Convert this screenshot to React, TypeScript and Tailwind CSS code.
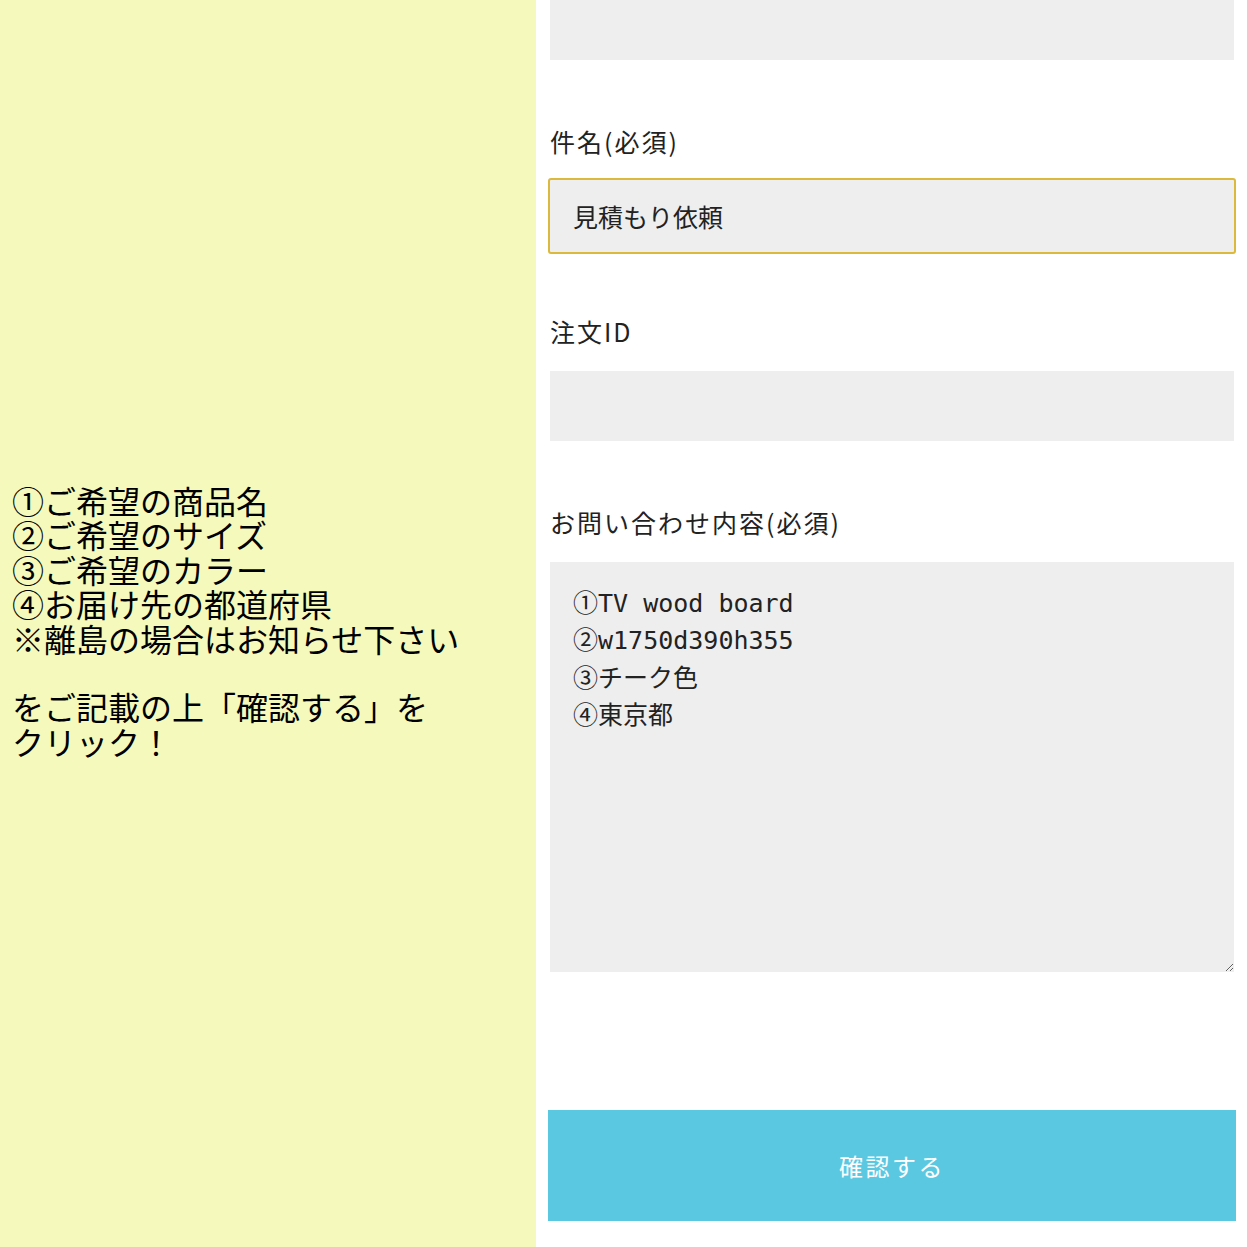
import React from "react";

const jp = { fontFamily: '"Noto Sans CJK JP", "Noto Sans", sans-serif' };

export default function App() {
  return (
    <div className="flex h-[1247px] w-[1247px] overflow-hidden bg-white">
      <div className="flex w-[536px] shrink-0 items-center bg-[#f5f9bb] pb-[6px] pl-[12px]">
        <p className="text-[32px] leading-[34.4px] text-black" style={jp}>
          ①ご希望の商品名
          <br />
          ②ご希望のサイズ
          <br />
          ③ご希望のカラー
          <br />
          ④お届け先の都道府県
          <br />
          ※離島の場合はお知らせ下さい
          <br />
          <br />
          をご記載の上「確認する」を
          <br />
          クリック！
        </p>
      </div>
      <div className="flex flex-1 flex-col pl-[12px] pr-[11px]" style={jp}>
        <input
          readOnly
          value=""
          className="mx-[2px] -mt-[10px] h-[70px] shrink-0 bg-[#eeeeee] outline-none"
        />
        <label className="mx-[2px] mt-[63px] h-[36px] text-[25px] leading-[36px] tracking-[2px] text-[#222]">
          件名(必須)
        </label>
        <input
          readOnly
          value="見積もり依頼"
          className="mt-[19px] h-[76px] shrink-0 rounded-[3px] border-2 border-[#dcb93c] bg-[#eeeeee] pl-[23px] text-[25px] text-[#222] outline-none"
          style={jp}
        />
        <label className="mx-[2px] mt-[59px] h-[36px] text-[25px] leading-[36px] tracking-[2px] text-[#222]">
          注文ID
        </label>
        <input
          readOnly
          value=""
          className="mx-[2px] mt-[22px] h-[70px] shrink-0 bg-[#eeeeee] outline-none"
        />
        <label className="mx-[2px] mt-[63px] h-[36px] text-[25px] leading-[36px] tracking-[2px] text-[#222]">
          お問い合わせ内容(必須)
        </label>
        <textarea
          readOnly
          value={"①TV wood board\n②w1750d390h355\n③チーク色\n④東京都"}
          className="mx-[2px] mt-[22px] h-[410px] shrink-0 bg-[#eeeeee] pl-[23px] pt-[23px] text-[25px] leading-[37.3px] text-[#222] outline-none"
          style={{
            fontFamily: '"DejaVu Sans Mono", "Noto Sans CJK JP", monospace',
          }}
        />
        <button
          className="mt-[138px] h-[111px] shrink-0 bg-[#5bc8e2] text-[24px] tracking-[2.5px] text-white"
          style={jp}
        >
          確認する
        </button>
      </div>
    </div>
  );
}
